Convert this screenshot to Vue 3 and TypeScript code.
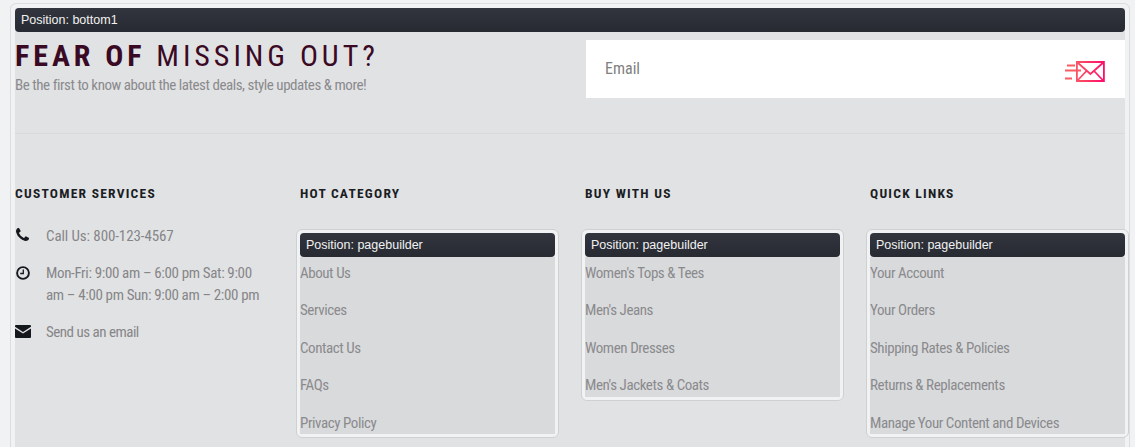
<template>
  <div class="frame">
    <div class="pos-bar">Position: bottom1</div>
    <div class="signup">
      <div class="signup-text">
        <h2 class="signup-title"><strong>FEAR OF</strong> MISSING OUT?</h2>
        <p class="signup-sub">Be the first to know about the latest deals, style updates &amp; more!</p>
      </div>
      <div class="email-box">
        <span class="email-label">Email</span>
        <svg class="email-icon" width="40" height="22" viewBox="0 0 40 22" fill="none">
          <defs>
            <linearGradient id="mail" gradientUnits="userSpaceOnUse" x1="0" y1="0" x2="40" y2="0">
              <stop offset="0" stop-color="#f9706a" />
              <stop offset="0.5" stop-color="#fb3f62" />
              <stop offset="1" stop-color="#ff0a6c" />
            </linearGradient>
          </defs>
          <path stroke="#fa5c62" stroke-width="1.800" d="M2 4.500h8M0 9.500h16M0 17.500h7" />
          <path stroke="url(#mail)" stroke-width="1.800" d="M11.900 1h27v19h-27zM11.900 1l13.500 12L38.900 1M12 20l9.500-10M38.600 20l-9.500-10" />
        </svg>
      </div>
    </div>
    <hr class="divider" />
    <div class="columns">
      <section class="col">
        <h3 class="col-title">CUSTOMER SERVICES</h3>
        <ul class="contact">
          <li>
            <svg class="contact-icon phone" width="13" height="13" viewBox="0 0 1408 1408">
              <path fill="#14171c" d="M1408 1112q0 27-10 70.500t-21 68.500q-21 50-122 106-94 51-186 51-27 0-53-3.500t-57.500-12.500-47-14.500-55.500-20.500-49-18q-98-35-175-83-127-79-264-216t-216-264q-48-77-83-175-3-9-18-49t-20.500-55.500-14.500-47-12.500-57.500-3.500-53q0-92 51-186 56-101 106-122 25-11 68.500-21t70.500-10q14 0 21 3 18 6 53 76 11 19 30 54t35 63.500 31 53.500q3 4 17.500 25t21.500 35.500 7 28.500q0 20-28.500 50t-62 55-62 53-28.500 46q0 9 5 22.500t8.500 20.500 14 24 11.500 19q76 137 174 235t235 174q2 1 19 11.500t24 14 20.500 8.500 22.500 5q18 0 46-28.500t53-62 55-62 50-28.500q14 0 28.500 7t35.500 21.500 25 17.500q25 15 53.500 31t63.500 35 54 30q70 35 76 53 3 7 3 21z" />
            </svg>
            <span class="call">Call Us: 800-123-4567</span>
          </li>
          <li>
            <svg class="contact-icon clock" width="14" height="14" viewBox="0 0 14 14" fill="none">
              <circle cx="7" cy="7" r="5.900" stroke="#14171c" stroke-width="1.900" />
              <path d="M7.300 3.500v4H4.200" stroke="#14171c" stroke-width="1.300" />
            </svg>
            <span>Mon-Fri: 9:00 am – 6:00 pm Sat: 9:00 am – 4:00 pm Sun: 9:00 am – 2:00 pm</span>
          </li>
          <li>
            <svg class="contact-icon" width="16" height="13" viewBox="0 0 16 13">
              <path fill="#14171c" d="M1 0h14a1 1 0 0 1 1 1v.8L8 7 0 1.800V1a1 1 0 0 1 1-1zM0 3.400l8 5.200 8-5.200V12a1 1 0 0 1-1 1H1a1 1 0 0 1-1-1z" />
            </svg>
            <span class="send">Send us an email</span>
          </li>
        </ul>
      </section>
      <section v-for="group in groups" :key="group.title" class="col">
        <h3 class="col-title">{{ group.title }}</h3>
        <div class="builder">
          <div class="pos-bar">Position: pagebuilder</div>
          <ul class="links">
            <li v-for="link in group.links" :key="link">{{ link }}</li>
          </ul>
        </div>
      </section>
    </div>
  </div>
</template>

<script setup lang="ts">
const groups = [
  {
    title: "HOT CATEGORY",
    links: ["About Us", "Services", "Contact Us", "FAQs", "Privacy Policy"],
  },
  {
    title: "BUY WITH US",
    links: ["Women's Tops & Tees", "Men's Jeans", "Women Dresses", "Men's Jackets & Coats"],
  },
  {
    title: "QUICK LINKS",
    links: [
      "Your Account",
      "Your Orders",
      "Shipping Rates & Policies",
      "Returns & Replacements",
      "Manage Your Content and Devices",
    ],
  },
];
</script>

<style>
html,
body {
  background: #f1f2f4;
  overflow: hidden;
}
</style>

<style scoped>
.frame {
  box-sizing: border-box;
  margin: 3px 5px 0 10px;
  padding: 4px;
  height: 460px;
  border: 1px solid #dcdddf;
  border-radius: 6px;
  background: #e1e2e4;
  box-shadow: inset 4px 0 0 #f1f2f4, inset -4px 0 0 #f1f2f4, inset 0 4px 0 #f1f2f4;
  font-family: "Roboto Condensed", Roboto, sans-serif;
  font-stretch: 75%;
}

.pos-bar {
  height: 24px;
  padding-left: 6px;
  border-radius: 4px;
  background: linear-gradient(#32353e, #272a31);
  color: #f2f2f2;
  font: 12.500px/24px "Liberation Sans", Arial, sans-serif;
}

.signup {
  display: flex;
  box-sizing: border-box;
  height: 66px;
  padding-top: 8px;
}

.signup-text {
  width: 571px;
}

.signup-title {
  margin: 0;
  color: #3a0a24;
  font-size: 30px;
  font-weight: 400;
  line-height: 32px;
  letter-spacing: 3.950px;
}

.signup-title strong {
  font-weight: 700;
}

.signup-sub {
  margin: 4px 0 0;
  color: #8a8a8d;
  font-size: 15px;
  line-height: 18px;
  letter-spacing: -0.450px;
}

.email-box {
  display: flex;
  align-items: center;
  justify-content: space-between;
  width: 539px;
  height: 58px;
  padding: 0 20px 0 19px;
  box-sizing: border-box;
  background: #fff;
}

.email-label {
  margin-bottom: 2px;
  color: #808080;
  font-size: 16px;
}

.email-icon {
  margin-top: 5px;
}

.divider {
  margin: 35px 0 0;
  border: 0;
  border-top: 1px solid #d8d9db;
}

.columns {
  display: grid;
  grid-template-columns: repeat(4, 285px);
  padding-top: 51px;
}

.col-title {
  margin: 0 0 28px;
  color: #1a1d23;
  font-size: 13.500px;
  font-weight: 700;
  line-height: 16px;
  letter-spacing: 1.250px;
}

.contact {
  margin: -4px 0 0;
  padding: 0;
  list-style: none;
  color: #868688;
  font-size: 15px;
  line-height: 22px;
  letter-spacing: -0.350px;
}

.contact li {
  display: flex;
  width: 250px;
  margin-bottom: 15px;
}

.contact-icon {
  flex: none;
  margin: 4px 0 0;
}

.contact-icon.phone {
  margin: 3px 0 0 1px;
}

.contact-icon.clock {
  margin-left: 1px;
}

.contact span {
  margin-left: auto;
  width: 219px;
}

.contact .call {
  letter-spacing: -0.100px;
}

.contact .send {
  letter-spacing: -0.500px;
}

.builder {
  box-sizing: border-box;
  width: 263px;
  margin: 0 0 0 -4px;
  padding: 3px;
  border: 1px solid #cfd0d2;
  border-radius: 6px;
  background: #f1f2f4;
}

.links {
  margin: 0;
  padding: 4.750px 0 0.250px;
  list-style: none;
  background: #d9dadc;
  color: #8a8a8d;
  font-size: 15px;
  line-height: 22px;
  letter-spacing: -0.430px;
}

.links li {
  padding-bottom: 15.500px;
}

.links li:last-child {
  padding-bottom: 0;
}
</style>
